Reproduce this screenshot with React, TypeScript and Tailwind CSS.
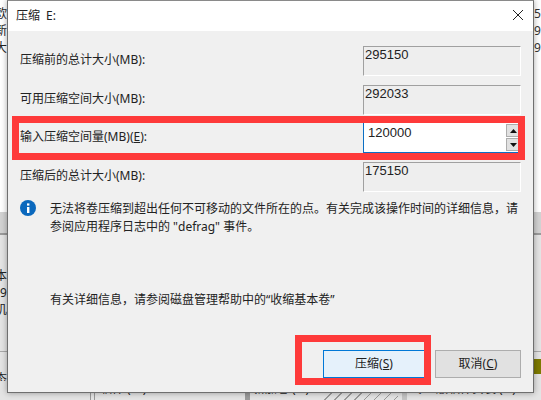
const font = `[font-family:'Noto_Sans','Noto_Sans_CJK_SC',sans-serif]`;

const rows = [
  { label: '压缩前的总计大小(MB):', value: '295150' },
  { label: '可用压缩空间大小(MB):', value: '292033' },
  { label: 'input', value: '120000' },
  { label: '压缩后的总计大小(MB):', value: '175150' },
];

function ReadonlyBox({ value }: { value: string }) {
  return (
    <div className="w-[158px] h-[30px] border border-t-[#a0a0a0] border-l-[#a0a0a0] border-r-white border-b-white bg-[#eeeeee] text-[13px] leading-[15px] pl-px text-[#222] [font-family:'Liberation_Sans',sans-serif]">
      {value}
    </div>
  );
}

function Spinner() {
  return (
    <div className="flex flex-col gap-px w-[14px] mr-[1px] mt-px">
      <div className="h-[13px] bg-[#e1e1e1] border border-[#adadad] flex items-center justify-center">
        <svg width="7" height="4" viewBox="0 0 7 4"><path d="M3.5 0L7 4H0z" fill="#111" /></svg>
      </div>
      <div className="h-[13px] bg-[#e1e1e1] border border-[#adadad] flex items-center justify-center">
        <svg width="7" height="4" viewBox="0 0 7 4"><path d="M0 0h7L3.5 4z" fill="#111" /></svg>
      </div>
    </div>
  );
}

function NumberInput({ value }: { value: string }) {
  return (
    <div className="w-[158px] h-[30px] bg-white border-l border-b border-[#0b6fc4] flex justify-between">
      <span className="text-[13px] leading-[15px] pl-[4px] pt-[2px] text-[#222] [font-family:'Liberation_Sans',sans-serif]">{value}</span>
      <Spinner />
    </div>
  );
}

function Row({ label, value }: { label: string; value: string }) {
  const isInput = label === 'input';
  return (
    <div className="flex items-start justify-between h-[30px]">
      <span className="text-[12px] leading-[18px] pt-[5px] text-[#222]">
        {isInput ? (
          <>输入压缩空间量(MB)(<span className="underline">E</span>):</>
        ) : (
          label
        )}
      </span>
      {isInput ? <NumberInput value={value} /> : <ReadonlyBox value={value} />}
    </div>
  );
}

function InfoIcon() {
  return (
    <svg width="16" height="16" viewBox="0 0 16 16" className="shrink-0">
      <circle cx="8" cy="8" r="8" fill="#0a68bd" />
      <rect x="7" y="7" width="2.4" height="6" fill="#fff" />
      <rect x="7" y="3.4" width="2.4" height="2.2" fill="#fff" />
    </svg>
  );
}

// slivers of the Disk Management window behind the dialog
function Backdrop() {
  return (
    <div className="h-full flex flex-col overflow-hidden text-[12px] leading-[17px] text-[#222]">
      <div className="h-[212px] bg-white flex justify-between pt-[5px]">
        <div className="-ml-[5px]">
          <div>欧</div>
          <div>新</div>
          <div>大</div>
        </div>
        <div className="w-[7px] text-[#333]">
          <div>5</div>
          <div>9</div>
          <div>9</div>
        </div>
      </div>
      <div className="h-[21px] bg-[#d2d2d2]" />
      <div className="h-[2px] bg-[#9a9a9a]" />
      <div className="h-[116px] bg-[#e4e4e4] pt-[32px]">
        <div className="-ml-[5px]">本</div>
        <div>9.</div>
        <div className="-ml-[5px]">讥</div>
      </div>
      <div className="h-px bg-[#a9a9a9]" />
      <div className="h-[29px] bg-[#e4e4e4] flex justify-between">
        <div className="-ml-[5px] pt-[18px]">态</div>
        <div className="w-[7px] h-[15px] mt-[7px] bg-[#7d7a00]" />
      </div>
      <div className="h-[19px] bg-[#e4e4e4] flex pl-[7px] leading-[16px]">
        <div className="w-[83px] pt-[16px] text-[11px] leading-[14px]">69.92 GB</div>
        <div className="w-px h-[8px] mt-[11px] bg-[#999]" />
        <div className="w-px h-[8px] mt-[11px] ml-[3px] bg-[#999]" />
        <div className="w-[145px] ml-[5px]">软件 (D:)</div>
        <div className="w-[5px] h-[8px] mt-[11px] bg-[#9a9a9a]" />
        <div className="w-[69px] ml-[3px] whitespace-nowrap">新加卷 (E:)</div>
        <div className="w-[76px] h-[8px] mt-[11px] bg-[repeating-linear-gradient(135deg,#9a9a9a_0,#9a9a9a_1px,transparent_1px,transparent_7px)]" />
        <div className="w-[5px] h-[8px] mt-[11px] ml-[4px] bg-[#c4c4c4]" />
        <div className="ml-[5px] whitespace-nowrap">专业版软件安装 (F:)</div>
      </div>
    </div>
  );
}

export default function App() {
  return (
    <div className={`relative w-[541px] h-[400px] overflow-hidden ${font}`}>
      <Backdrop />

      {/* the dialog sits on top of Disk Management */}
      <div className="absolute left-[7px] top-0 w-[527px] h-[393px] bg-[#f0f0f0] border border-[#6f6f6f] border-t-[#8a8a8a] flex flex-col shadow-[0_0_6px_rgba(0,0,0,0.35)]">
        <div className="h-[30px] bg-white flex items-center justify-between shrink-0">
          <span className="text-[12px] pl-[8px] text-[#222] [word-spacing:3px]">压缩 E:</span>
          <svg width="12" height="12" viewBox="0 0 12 12" className="mr-[9px] mt-[-2px]">
            <path d="M1 1l10 10M11 1L1 11" stroke="#222" strokeWidth="1" fill="none" />
          </svg>
        </div>

        <div className="flex-1 flex flex-col pl-[12px] pr-[12px] pt-[15px] text-[#222]">
          <div className="flex flex-col gap-[8.5px]">
            {rows.map((r) => (
              <Row key={r.label} label={r.label} value={r.value} />
            ))}
          </div>

          <div className="flex gap-[14px] mt-[8px]">
            <InfoIcon />
            <p className="text-[12px] leading-[18px] w-[472px]">
              无法将卷压缩到超出任何不可移动的文件所在的点。有关完成该操作时间的详细信息，请参阅应用程序日志中的 "defrag" 事件。
            </p>
          </div>

          <p className="text-[12px] leading-[18px] mt-[55px] pl-[30px]">
            有关详细信息，请参阅磁盘管理帮助中的“收缩基本卷”
          </p>

          <div className="flex justify-end gap-[10px] mt-[41px]">
            <button className="w-[102px] h-[28px] bg-[#e5f1fb] border border-[#0078d7] text-[12px] text-[#222]">
              压缩(<span className="underline">S</span>)
            </button>
            <button className="w-[86px] h-[28px] bg-[#e1e1e1] border border-[#adadad] text-[12px] text-[#222]">
              取消(<span className="underline">C</span>)
            </button>
          </div>
        </div>
      </div>

      {/* red highlight boxes drawn over the screenshot */}
      <div className="absolute left-[12px] top-[116px] w-[513px] h-[44px] border-[7px] border-[#fe3a3a]" />
      <div className="absolute left-[295px] top-[335px] w-[136px] h-[50px] border-[7px] border-[#fe3a3a]" />
    </div>
  );
}
